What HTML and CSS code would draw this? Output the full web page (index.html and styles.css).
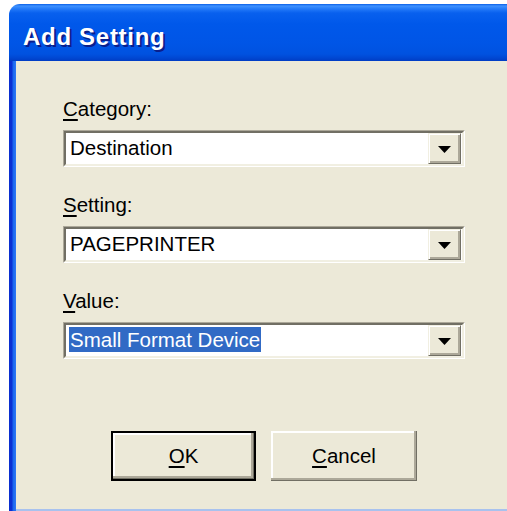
FILE: index.html
```html
<!DOCTYPE html>
<html lang="en">
<head>
<meta charset="utf-8">
<title>Add Setting</title>
<link rel="stylesheet" href="styles.css">
</head>
<body>
<div class="window">
  <div class="titlebar"><span class="title">Add Setting</span></div>
  <div class="frame">
    <div class="client">
      <div class="fields">
        <div class="field">
          <label class="label"><u>C</u>ategory:</label>
          <div class="combo">
            <div class="combo-inner">
              <span class="combo-text">Destination</span>
              <span class="drop"><svg width="13" height="7" viewBox="0 0 13 7"><polygon points="0,0 13,0 6.5,7" fill="#000"/></svg></span>
            </div>
          </div>
        </div>
        <div class="field">
          <label class="label"><u>S</u>etting:</label>
          <div class="combo">
            <div class="combo-inner">
              <span class="combo-text">PAGEPRINTER</span>
              <span class="drop"><svg width="13" height="7" viewBox="0 0 13 7"><polygon points="0,0 13,0 6.5,7" fill="#000"/></svg></span>
            </div>
          </div>
        </div>
        <div class="field">
          <label class="label"><u>V</u>alue:</label>
          <div class="combo">
            <div class="combo-inner">
              <span class="combo-text selected">Small Format Device</span>
              <span class="drop"><svg width="13" height="7" viewBox="0 0 13 7"><polygon points="0,0 13,0 6.5,7" fill="#000"/></svg></span>
            </div>
          </div>
        </div>
      </div>
      <div class="buttons">
        <button class="btn btn-default"><u>O</u>K</button>
        <button class="btn btn-cancel"><u>C</u>ancel</button>
      </div>
    </div>
  </div>
</div>
</body>
</html>
```
FILE: styles.css
```css
html, body {
  margin: 0;
  height: 100%;
  overflow: hidden;
  background: #fff;
}

body {
  font-family: "Liberation Sans", Arial, sans-serif;
  color: #000;
}

/* window chrome */
.window {
  margin: 4px 0 0 9px;
  height: 507px;
  display: flex;
  flex-direction: column;
}

.titlebar {
  flex: none;
  height: 57px;
  box-sizing: border-box;
  padding: 19px 0 0 14px;
  border-radius: 11px 0 0 0;
  background: linear-gradient(to bottom,
    #0A5FE6 0px, #3E92FF 2px, #2279F8 5px, #0860EE 9px,
    #0058EA 20px, #0055E6 40px, #0052E0 50px, #0047D2 54px, #003CC4 57px);
}

.title {
  font: bold 24px/28px "Liberation Sans", Arial, sans-serif;
  letter-spacing: 0.7px;
  color: #fff;
  text-shadow: 2px 2px 0 #0A1E8C;
}

.frame {
  flex: 1;
  display: flex;
  padding-left: 7px;
  background: linear-gradient(to right, #0A2ECF 0, #0A30D4 3px, #1A66EE 4px, #2E78F4 7px);
}

.client {
  flex: 1;
  background: #ECE9D8;
  border-bottom: 2px solid #A8C2EE;
  padding: 36px 0 0 47px;
}

u {
  text-decoration: underline;
  text-underline-offset: 3px;
  text-decoration-thickness: 1.5px;
}

/* form fields */
.fields {
  width: 402px;
  display: flex;
  flex-direction: column;
  gap: 26px;
}

.label {
  display: block;
  font-size: 20.5px;
  line-height: 24px;
  margin-bottom: 9px;
}

.combo {
  height: 37px;
  box-sizing: border-box;
  border: 1px solid;
  border-color: #ACA899 #FFFFFF #FFFFFF #ACA899;
}

.combo-inner {
  height: 100%;
  box-sizing: border-box;
  border: 2px solid;
  border-color: #716F64 #F1EFE2 #F1EFE2 #716F64;
  background: #fff;
  display: flex;
}

.combo-text {
  align-self: flex-start;
  margin: 2px 0 0 3px;
  padding: 0 1px;
  font-size: 20.5px;
  line-height: 25px;
  white-space: nowrap;
}

.combo-text.selected {
  background: #316AC5;
  color: #fff;
}

.drop {
  margin-left: auto;
  margin-right: 1px;
  width: 33px;
  box-sizing: border-box;
  background: #ECE9D8;
  border: 1px solid;
  border-color: #F1EFE2 #716F64 #716F64 #F1EFE2;
  box-shadow: inset 1px 1px 0 #fff, inset -2px -2px 0 #ACA899;
  display: flex;
  align-items: center;
  justify-content: center;
}

.drop svg {
  display: block;
  margin-top: 1px;
}

/* dialog buttons */
.buttons {
  width: 402px;
  display: flex;
  justify-content: center;
  gap: 15px;
  margin-top: 72px;
}

.btn {
  height: 50px;
  box-sizing: border-box;
  padding: 0;
  background: #ECE9D8;
  color: #000;
  font: 20.5px "Liberation Sans", Arial, sans-serif;
  border: none;
}

.btn-default {
  width: 145px;
  border: 2px solid #000;
  box-shadow: inset -1px -1px 0 #716F64, inset -3px -3px 0 #ACA899, inset 2px 2px 0 #fff;
}

.btn-cancel {
  width: 146px;
  box-shadow: inset -1px -1px 0 #716F64, inset -3px -3px 0 #ACA899, inset 2px 2px 0 #fff;
}
```
